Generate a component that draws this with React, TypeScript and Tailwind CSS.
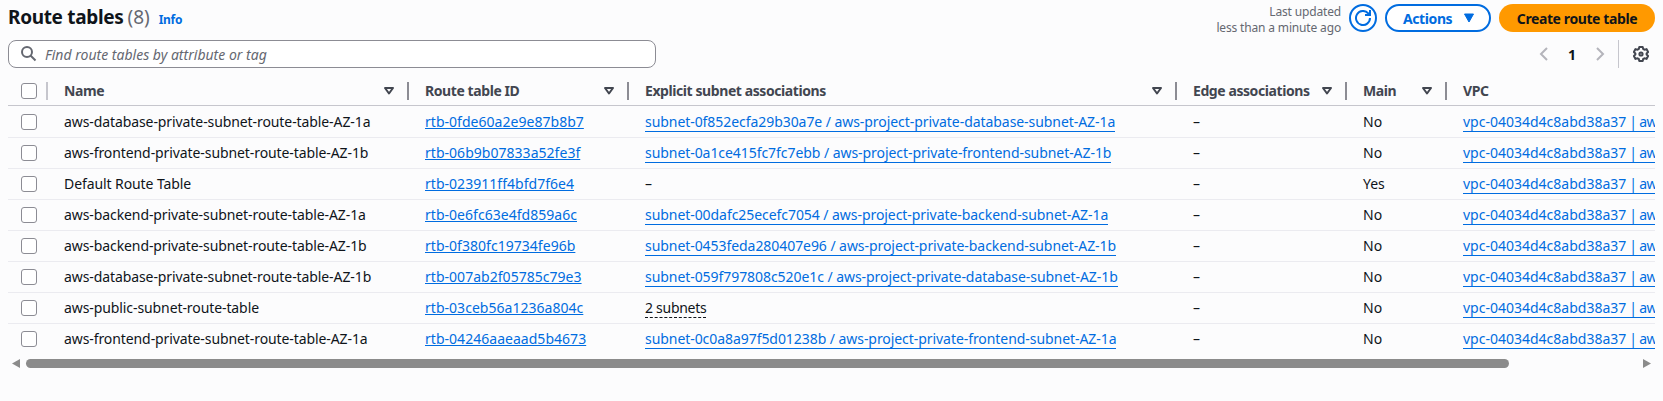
import type { ReactNode } from "react";

const GRID = "grid grid-cols-[40px_360px_220px_548px_170px_100px_209px]";

type Row = { name: string; id: string; subnet?: string; count?: string; main: string };

const rows: Row[] = [
  { name: "aws-database-private-subnet-route-table-AZ-1a", id: "rtb-0fde60a2e9e87b8b7", subnet: "subnet-0f852ecfa29b30a7e / aws-project-private-database-subnet-AZ-1a", main: "No" },
  { name: "aws-frontend-private-subnet-route-table-AZ-1b", id: "rtb-06b9b07833a52fe3f", subnet: "subnet-0a1ce415fc7fc7ebb / aws-project-private-frontend-subnet-AZ-1b", main: "No" },
  { name: "Default Route Table", id: "rtb-023911ff4bfd7f6e4", main: "Yes" },
  { name: "aws-backend-private-subnet-route-table-AZ-1a", id: "rtb-0e6fc63e4fd859a6c", subnet: "subnet-00dafc25ecefc7054 / aws-project-private-backend-subnet-AZ-1a", main: "No" },
  { name: "aws-backend-private-subnet-route-table-AZ-1b", id: "rtb-0f380fc19734fe96b", subnet: "subnet-0453feda280407e96 / aws-project-private-backend-subnet-AZ-1b", main: "No" },
  { name: "aws-database-private-subnet-route-table-AZ-1b", id: "rtb-007ab2f05785c79e3", subnet: "subnet-059f797808c520e1c / aws-project-private-database-subnet-AZ-1b", main: "No" },
  { name: "aws-public-subnet-route-table", id: "rtb-03ceb56a1236a804c", count: "2 subnets", main: "No" },
  { name: "aws-frontend-private-subnet-route-table-AZ-1a", id: "rtb-04246aaeaad5b4673", subnet: "subnet-0c0a8a97f5d01238b / aws-project-private-frontend-subnet-AZ-1a", main: "No" },
];

function Checkbox() {
  return <span className="ml-[13px] block size-4 rounded-[3px] border border-[#8c8c94] bg-white" />;
}

function SortIcon() {
  return (
    <svg width="16" height="16" viewBox="0 0 16 16" fill="none" stroke="#424650" strokeWidth="2" strokeLinejoin="round">
      <path d="M4 5h8l-4 5.500-4-5.500Z" />
    </svg>
  );
}

function HeadCell({ children, sort = true }: { children: ReactNode; sort?: boolean }) {
  return (
    <div className="flex items-center justify-between pl-[17px] text-[14px] font-bold tracking-[-0.42px] text-[#424650] nth-[2]:pl-4">
      <span className="whitespace-nowrap">{children}</span>
      {sort && (
        <span className="-mr-px flex items-center gap-[10px]">
          <SortIcon />
          <span className="h-[18px] w-[2px] bg-[#8c8c94]" />
        </span>
      )}
    </div>
  );
}

export default function App() {
  return (
    <div className="h-[401px] w-[1663px] overflow-hidden bg-[#fcfcfd] px-2 font-['Noto_Sans',sans-serif] text-[14px] text-[#0f141a]">
      <header className="flex h-[40px] items-start justify-between pt-1">
        <div className="-mt-px flex h-7 items-baseline whitespace-nowrap">
          <h1 className="text-[19px] leading-[28px] font-bold tracking-[-0.33px]">Route tables</h1>
          <span className="ml-[4px] text-[19px] text-[#656871]">(8)</span>
          <a className="ml-[9px] text-[12px] font-bold tracking-[-0.3px] text-[#006ce0]">Info</a>
        </div>
        <div className="flex">
          <div className="mr-2 text-right text-[12px] leading-4 tracking-[-0.16px] whitespace-nowrap text-[#656871]">
            <div>Last updated</div>
            <div>less than a minute ago</div>
          </div>
          <button className="flex size-7 items-center justify-center rounded-full border-2 border-[#006ce0] bg-white">
            <svg className="shrink-0" width="16" height="16" viewBox="0 0 16 16" fill="none" stroke="#006ce0" strokeWidth="2">
              <path d="M15 8a7 7 0 1 1-1.800-4.700L15 5" />
              <path d="M15 0v5h-5" />
            </svg>
          </button>
          <button className="ml-2 flex h-7 w-[106px] items-center rounded-full border-2 border-[#006ce0] bg-white pl-[16px] font-bold tracking-[-0.4px] text-[#006ce0]">
            <span className="w-[60px] text-left">Actions</span>
            <svg width="12" height="10" viewBox="0 0 12 10" fill="#006ce0" stroke="#006ce0" strokeWidth="1" strokeLinejoin="round">
              <path d="M1.500 1h9L6 9z" />
            </svg>
          </button>
          <button className="ml-2 h-7 w-[156px] rounded-full bg-[#ff9900] font-bold tracking-[-0.4px] whitespace-nowrap text-[#0f141a]">Create route table</button>
        </div>
      </header>

      <div className="flex h-7 items-center justify-between">
        <div className="flex h-7 w-[648px] items-center rounded-lg border border-[#8c8c94] bg-white pl-3 text-[#656871]">
          <svg width="16" height="16" viewBox="0 0 16 16" fill="none" stroke="#656871" strokeWidth="2">
            <circle cx="6" cy="6" r="5" />
            <path d="m9.500 9.500 5 5" />
          </svg>
          <span className="ml-[8px] tracking-[0.01px] italic">Find route tables by attribute or tag</span>
        </div>
        <div className="flex h-7 items-center">
          <svg width="16" height="16" viewBox="0 0 16 16" fill="none" stroke="#b4b4bb" strokeWidth="2">
            <path d="m11 2-6 6 6 6" />
          </svg>
          <span className="w-[40px] text-center font-bold">1</span>
          <svg width="16" height="16" viewBox="0 0 16 16" fill="none" stroke="#b4b4bb" strokeWidth="2">
            <path d="m5 2 6 6-6 6" />
          </svg>
          <span className="ml-[10px] h-7 w-px bg-[#c6c6cd]" />
          <svg className="mr-[6px] ml-[14px]" width="16" height="16" viewBox="0 0 16 16" fill="none" stroke="#424650" strokeWidth="2" strokeLinejoin="round">
            <path d="M6.300 1h3.400l.5 2 1.300.7 2-.6 1.600 2.900-1.500 1.400v1.200l1.500 1.400-1.600 2.900-2-.6-1.300.7-.5 2H6.300l-.5-2-1.300-.7-2 .6L.9 10l1.500-1.400V7.400L.9 6l1.600-2.900 2 .6L5.800 3Z" />
            <circle cx="8" cy="8" r="1.600" />
          </svg>
        </div>
      </div>

      <div className="mt-[8px] overflow-hidden">
        <div className={`${GRID} h-[30px] border-b border-[#c6c6cd]`}>
          <div className="flex items-center justify-between">
            <Checkbox />
            <span className="h-[18px] w-[2px] bg-[#c6c6cd]" />
          </div>
          <HeadCell>Name</HeadCell>
          <HeadCell>Route table ID</HeadCell>
          <HeadCell>Explicit subnet associations</HeadCell>
          <HeadCell>Edge associations</HeadCell>
          <HeadCell>Main</HeadCell>
          <HeadCell sort={false}>VPC</HeadCell>
        </div>
        <div className="pt-px">
          {rows.map((r) => (
            <div key={r.id} className={`${GRID} h-[31px] border-b border-[#ebebf0] leading-5 whitespace-nowrap last:border-transparent *:flex *:items-center`}>
              <div><Checkbox /></div>
              <div className="pl-4 tracking-[-0.09px]">{r.name}</div>
              <div className="pl-[17px]">
                <a className="tracking-[0.03px] text-[#006ce0] underline decoration-1 underline-offset-1">{r.id}</a>
              </div>
              <div className="pl-[17px] tracking-[-0.06px]">
                {r.subnet ? (
                  <a className="border-b border-[#006ce0] leading-[19px] text-[#006ce0]">{r.subnet}</a>
                ) : r.count ? (
                  <span className="border-b border-dashed border-[#0f141a] leading-[19px] tracking-[-0.28px]">{r.count}</span>
                ) : (
                  <span>–</span>
                )}
              </div>
              <div className="pl-[17px]">–</div>
              <div className="pl-[17px]">{r.main}</div>
              <div className="pl-[17px]">
                <a className="w-full border-b border-[#006ce0] leading-[19px] text-[#006ce0]">
                  vpc-04034d4c8abd38a37<span className="tracking-[-0.65px]"> | aw</span>
                </a>
              </div>
            </div>
          ))}
        </div>
      </div>

      <div className="mt-[4px] flex h-[9px] items-center">
        <svg className="ml-1" width="8" height="9" viewBox="0 0 8 9" fill="#8b8b8b"><path d="M8 0v9L0 4.500z" /></svg>
        <div className="ml-[6px] h-[9px] w-[1483px] rounded-full bg-[#8b8b8b]" />
        <svg className="ml-[134px]" width="8" height="9" viewBox="0 0 8 9" fill="#8b8b8b"><path d="M0 0v9l8-4.500z" /></svg>
      </div>
    </div>
  );
}
